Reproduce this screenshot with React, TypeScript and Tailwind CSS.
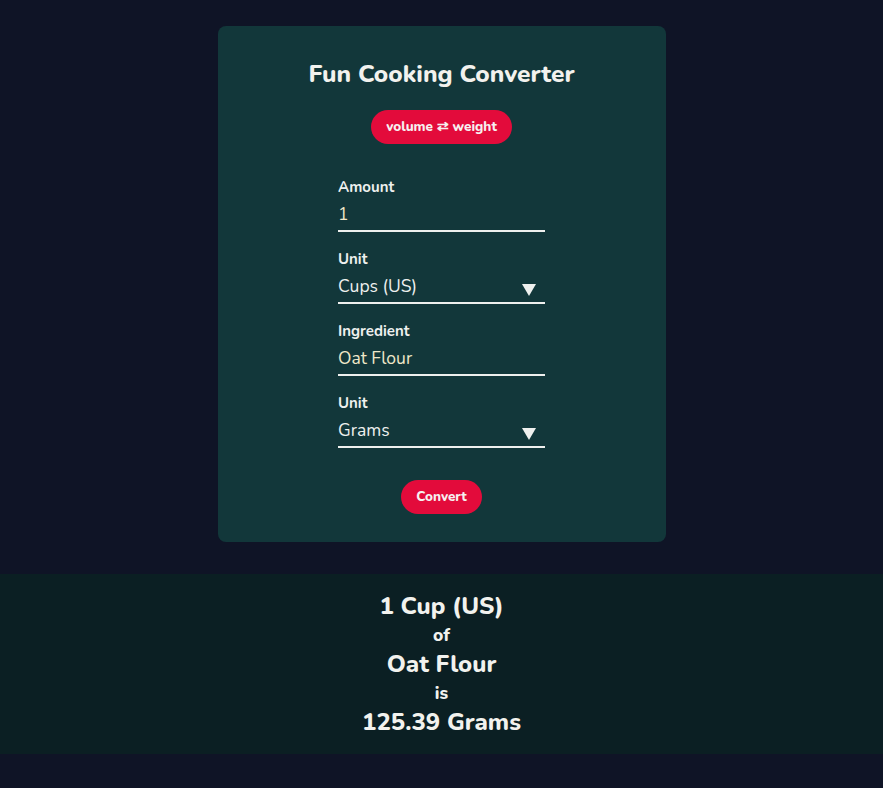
const font = { fontFamily: '"Nunito", "Lato", "Noto Sans", sans-serif' };

type FieldProps = {
  label: string;
  value: string;
  select?: boolean;
};

function Field({ label, value, select }: FieldProps) {
  return (
    <div className="w-full">
      <div className="text-[15px] font-bold leading-5 text-[#eef0ee]">{label}</div>
      <div className="mt-[5px] flex h-[30px] items-center justify-between border-b-2 border-[#eef0ee] pb-1">
        <span className={`text-[17.5px] leading-6 ${select ? "text-[#eef0ee]" : "text-[#efe7c8]"}`}>
          {value}
        </span>
        {select && (
          <svg width="14" height="12" viewBox="0 0 14 12" className="mr-[9px] mt-[7px]">
            <path d="M0 0h14L7 12z" fill="#eef0ee" />
          </svg>
        )}
      </div>
    </div>
  );
}

export default function App() {
  return (
    <div className="min-h-[788px] bg-[#0f1426] pt-[26px]" style={font}>
      <div className="mx-auto flex w-[448px] flex-col items-center rounded-lg bg-[#12373a] pb-7 pt-8">
        <h1 className="text-[24.5px] font-extrabold leading-8 text-[#f2f2ee]">Fun Cooking Converter</h1>
        <button
          type="button"
          className="mt-5 h-[34px] w-[141px] rounded-full bg-[#e30b3b] text-[13.5px] font-extrabold text-[#f6f0f0]"
        >
          volume ⇄ weight
        </button>
        <div className="mt-[33px] flex w-[207px] flex-col gap-[17px]">
          <Field label="Amount" value="1" />
          <Field label="Unit" value="Cups (US)" select />
          <Field label="Ingredient" value="Oat Flour" />
          <Field label="Unit" value="Grams" select />
        </div>
        <button
          type="button"
          className="mt-8 h-[34px] w-[81px] rounded-full bg-[#e30b3b] text-[13.5px] font-extrabold text-[#f6f0f0]"
        >
          Convert
        </button>
      </div>

      <div className="mt-8 flex h-[180px] flex-col items-center bg-[#0b1f23] pt-[18px] text-center font-extrabold text-[#f2f2ee]">
        <div className="text-[24px] leading-[29px]">1 Cup (US)</div>
        <div className="text-[17.5px] leading-[29px]">of</div>
        <div className="text-[24px] leading-[29px]">Oat Flour</div>
        <div className="text-[17.5px] leading-[29px]">is</div>
        <div className="text-[24px] leading-[29px]">125.39 Grams</div>
      </div>
    </div>
  );
}
